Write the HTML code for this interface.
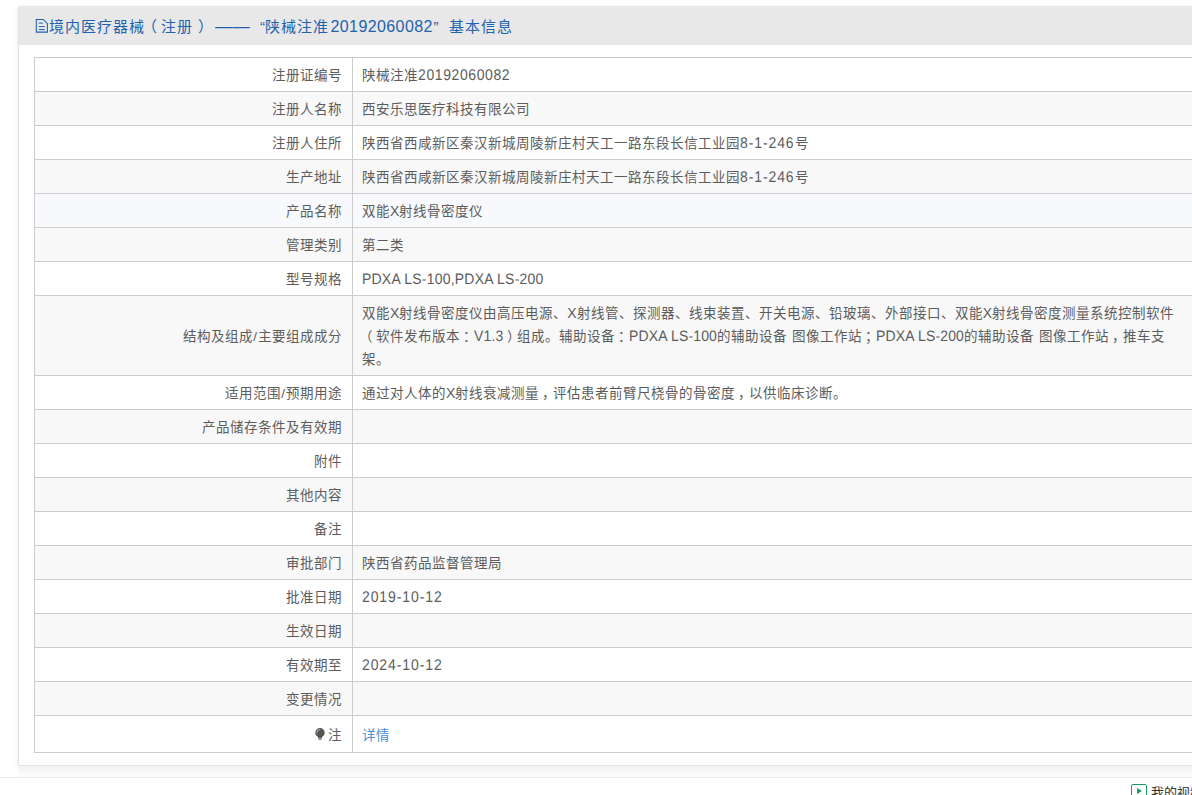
<!DOCTYPE html>
<html lang="zh-CN">
<head>
<meta charset="utf-8">
<style>
*{box-sizing:border-box;margin:0;padding:0}
html,body{width:1192px;height:795px;overflow:hidden;background:#fff}
body{font-family:"Liberation Sans",sans-serif;font-size:14px;color:#5c5c5c;position:relative}
.panel{position:absolute;left:18px;top:6px;width:1400px;height:760px;background:#fff;border:1px solid #e4e4e4;border-top:0;box-shadow:0 1px 6px rgba(0,0,0,.08)}
.hd{position:absolute;left:0;top:0;width:1400px;height:39px;background:#e8e8e8;color:#1f62b0;font-size:15px;letter-spacing:1px;line-height:39px;white-space:nowrap}
.hd span{position:absolute;top:1px;display:block;white-space:nowrap}
.hd svg{position:absolute;left:16px;top:12px}
table{position:absolute;left:15px;top:51px;width:1400px;border-collapse:collapse;border:1px solid #ccc;table-layout:fixed}
td{border:1px solid #ccc;height:34px;padding:6px 10px 4px 9px;font-size:13.5px;letter-spacing:1px;line-height:23px;vertical-align:middle}
td.l{width:318px;text-align:right;padding-right:10px;padding-left:4px}
tr:nth-child(even) td{background:#f8f8f8}
tr.hv td{background:#f8f9fd}
tr.last td{height:37px;padding-top:7px}
.pl{position:relative;left:-3.5px}.pr{position:relative;left:3.5px}.pc{position:relative;left:2.5px}.pm{position:relative;left:3px}
.n,.a,.d,.e,.m,.x{font-size:14px;letter-spacing:0}
.n,.a,.d,.e,.m{display:inline-block;line-height:1;white-space:nowrap;transform-origin:0 83%;transform:scaleY(1.11) skewX(0.05deg)}
.n{letter-spacing:.6px}.a{letter-spacing:.9px}.d{letter-spacing:.9px}.e{letter-spacing:.15px;transform:scaleY(1.08) skewX(0.05deg)}.m{letter-spacing:.21px;transform:scaleY(1.08) skewX(0.05deg)}
a{color:#4a90d9;text-decoration:none}
.band{position:absolute;left:18px;top:767px;width:1174px;height:10px;background:linear-gradient(#f3f3f3,#fefefe)}
.foot{position:absolute;left:0;top:777px;width:1192px;height:1px;background:#eaeaea}
.vid{position:absolute;left:1131px;top:784px;width:16px;height:16px;border:1px solid #1a9b62;border-radius:2px}
.vid i{position:absolute;left:5px;top:3px;width:0;height:0;border-left:5px solid #1a9b62;border-top:3.5px solid transparent;border-bottom:3.5px solid transparent}
.vt{position:absolute;left:1151px;top:783px;font-size:13px;line-height:20px;color:#333;white-space:nowrap}
</style>
</head>
<body>
<div class="panel">
<div class="hd"><svg width="16" height="18" viewBox="0 0 16 18"><path d="M1.3 1.5H8.3L12.4 5.6V14.1H1.3Z" fill="none" stroke="#1f5fae" stroke-width="1.05"/><path d="M3.8 5.1H8 M3.8 8.6H9.8 M3.8 11.6H9.8" fill="none" stroke="#1f5fae" stroke-width="1"/></svg><span style="left:30px">境内医疗器械</span><span style="left:123px">（</span><span style="left:141.5px">注册</span><span style="left:179px">）</span><span style="left:196px;font-size:16px;letter-spacing:0;transform:scaleX(1.09);transform-origin:0 0">——</span><span style="left:241px">“</span><span style="left:246px">陕械注准</span><span style="left:311.5px;font-size:16px;letter-spacing:.4px">20192060082</span><span style="left:414.5px">”</span><span style="left:429.5px">基本信息</span></div>
<table>
<tr><td class="l">注册证编号</td><td class="v">陕械注准<span class="n">20192060082</span></td></tr>
<tr><td class="l">注册人名称</td><td class="v">西安乐思医疗科技有限公司</td></tr>
<tr><td class="l">注册人住所</td><td class="v">陕西省西咸新区秦汉新城周陵新庄村天工一路东段长信工业园<span class="a">8-1-246</span>号</td></tr>
<tr><td class="l">生产地址</td><td class="v">陕西省西咸新区秦汉新城周陵新庄村天工一路东段长信工业园<span class="a">8-1-246</span>号</td></tr>
<tr class="hv"><td class="l">产品名称</td><td class="v">双能<span class="x">X</span>射线骨密度仪</td></tr>
<tr><td class="l">管理类别</td><td class="v">第二类</td></tr>
<tr><td class="l">型号规格</td><td class="v"><span class="m">PDXA LS-100,PDXA LS-200</span></td></tr>
<tr><td class="l">结构及组成/主要组成成分</td><td class="v">双能<span class="x">X</span>射线骨密度仪由高压电源、<span class="x">X</span>射线管、探测器、线束装置、开关电源、铅玻璃、外部接口、双能<span class="x">X</span>射线骨密度测量系统控制软件<br><span class="pl">（</span>软件发布版本<span class="pc">：</span><span class="e">V1.3</span><span class="pr">）</span>组成。辅助设备<span class="pc">：</span><span class="e">PDXA LS-100</span>的辅助设备 图像工作站<span class="pc">；</span><span class="e">PDXA LS-200</span>的辅助设备 图像工作站<span class="pm">，</span>推车支<br>架。</td></tr>
<tr><td class="l">适用范围/预期用途</td><td class="v">通过对人体的<span class="x">X</span>射线衰减测量<span class="pm">，</span>评估患者前臂尺桡骨的骨密度<span class="pm">，</span>以供临床诊断。</td></tr>
<tr><td class="l">产品储存条件及有效期</td><td class="v"></td></tr>
<tr><td class="l">附件</td><td class="v"></td></tr>
<tr><td class="l">其他内容</td><td class="v"></td></tr>
<tr><td class="l">备注</td><td class="v"></td></tr>
<tr><td class="l">审批部门</td><td class="v">陕西省药品监督管理局</td></tr>
<tr><td class="l">批准日期</td><td class="v"><span class="d">2019-10-12</span></td></tr>
<tr><td class="l">生效日期</td><td class="v"></td></tr>
<tr><td class="l">有效期至</td><td class="v"><span class="d">2024-10-12</span></td></tr>
<tr><td class="l">变更情况</td><td class="v"></td></tr>
<tr class="last"><td class="l"><svg width="10" height="12" viewBox="0 0 10 12" style="vertical-align:0;margin-right:3.5px"><circle cx="5" cy="4.7" r="4.7" fill="#555"/><path d="M3 8.4h4v2.1h-4z M3.7 10.9h2.6v.8h-2.6z" fill="#555"/><path d="M2 4.6a3 3 0 0 1 2.6-2.8" fill="none" stroke="#a8a8a8" stroke-width="1.1" stroke-linecap="round"/></svg>注</td><td class="v"><a>详情</a></td></tr>
</table>
</div>
<div class="band"></div>
<div class="foot"></div>
<div class="vid"><i></i></div>
<div class="vt">我的视频</div>
</body>
</html>
